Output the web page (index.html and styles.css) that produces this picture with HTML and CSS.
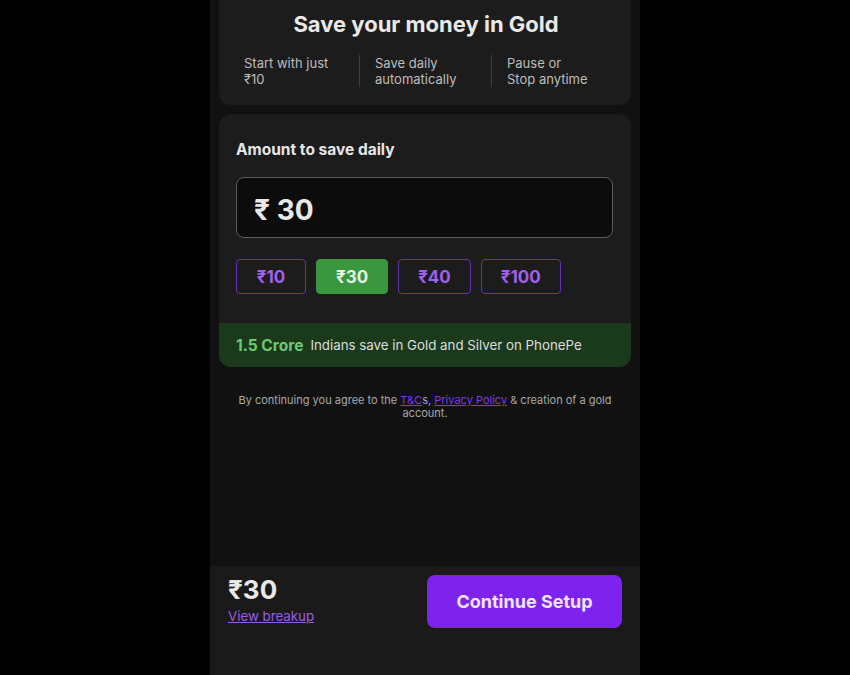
FILE: index.html
```html
<!DOCTYPE html>
<html lang="en">
<head>
<meta charset="utf-8">
<title>Save in Gold</title>
<link rel="stylesheet" href="styles.css">
</head>
<body>
<div class="phone">
  <section class="card intro">
    <h1 class="title">Save your money in Gold</h1>
    <div class="features">
      <div class="feature">Start with just<br>₹10</div>
      <div class="feature divided">Save daily<br>automatically</div>
      <div class="feature divided">Pause or<br>Stop anytime</div>
    </div>
  </section>

  <section class="card amount">
    <div class="amount-body">
      <h2 class="label">Amount to save daily</h2>
      <div class="input"><span class="rupee">₹</span> 30</div>
      <div class="chips">
        <button class="chip">₹10</button>
        <button class="chip active">₹30</button>
        <button class="chip">₹40</button>
        <button class="chip">₹100</button>
      </div>
    </div>
    <div class="band"><span class="band-strong">1.5 Crore</span> Indians save in Gold and Silver on PhonePe</div>
  </section>

  <p class="terms">By continuing you agree to the <a href="#">T&amp;C</a>s, <a href="#">Privacy Policy</a> &amp; creation of a gold account.</p>

  <footer class="bar">
    <div class="total">
      <div class="total-amount">₹30</div>
      <a class="breakup" href="#">View breakup</a>
    </div>
    <button class="cta">Continue Setup</button>
  </footer>
</div>
</body>
</html>
```

FILE: styles.css
```css
* { box-sizing: border-box; }
html, body { margin: 0; padding: 0; }
body {
  background: #000;
  font-family: Inter, "Noto Sans", "DejaVu Sans", sans-serif;
  display: flex;
  justify-content: center;
  height: 675px;
  overflow: hidden;
}
.phone {
  width: 430px;
  height: 675px;
  background: #111111;
  display: flex;
  flex-direction: column;
  overflow: hidden;
}
.card {
  margin: 0 9px;
  background: #1c1c1c;
  border-radius: 12px;
}
.intro {
  margin-top: -14px;
  padding: 24px 7px 18px 9px;
}
.title {
  margin: 0;
  text-align: center;
  font-size: 22px;
  line-height: 28px;
  font-weight: 700;
  color: #e9e9e9;
}
.features {
  margin-top: 17px;
  display: grid;
  grid-template-columns: 131px 132px 1fr;
}
.feature {
  padding-left: 16px;
  font-size: 13px;
  line-height: 16px;
  color: #bdbdbd;
}
.feature.divided {
  border-left: 1px solid #3d3d3d;
  padding-left: 15px;
}
.amount {
  margin-top: 9px;
  overflow: hidden;
}
.amount-body { padding: 26px 18px 29px 17px; }
.label {
  margin: 0;
  font-size: 15.5px;
  line-height: 20px;
  font-weight: 700;
  color: #e6e6e6;
}
.input {
  margin-top: 17px;
  height: 61px;
  background: #0c0c0c;
  border: 1px solid #5b5b5b;
  border-radius: 8px;
  padding: 4px 0 0 17px;
  display: flex;
  align-items: center;
  font-size: 28px;
  font-weight: 700;
  color: #e8e8e8;
  white-space: pre;
}
.chips {
  margin-top: 21px;
  display: flex;
  gap: 10px;
}
.chip {
  height: 35px;
  min-width: 70px;
  padding: 0 19px;
  background: transparent;
  border: 1.5px solid #6a30b4;
  border-radius: 4px;
  font-family: inherit;
  font-size: 17px;
  font-weight: 700;
  color: #a060f0;
}
.chip.active {
  background: #3b973f;
  border-color: #3b973f;
  color: #e4f3e4;
}
.band {
  height: 44px;
  background: #1b3a1c;
  padding-left: 17px;
  display: flex;
  align-items: center;
  gap: 7px;
  font-size: 13.3px;
  color: #dcdcdc;
}
.band-strong {
  font-size: 15.5px;
  font-weight: 700;
  color: #6dc870;
}
.terms {
  margin: 27px 0 0;
  padding: 0 26px;
  text-align: center;
  font-size: 11px;
  line-height: 13px;
  color: #a8a8a8;
}
.terms a { color: #7d3ae8; }
.bar {
  margin-top: auto;
  height: 109px;
  background: #1a1a1a;
  display: flex;
  justify-content: space-between;
  align-items: flex-start;
  padding: 9px 18px 0 18px;
}
.total { padding-top: 1px; }
.total-amount {
  font-size: 26px;
  line-height: 28px;
  font-weight: 700;
  color: #e8e8e8;
}
.breakup {
  display: block;
  margin-top: 3px;
  font-size: 13.3px;
  line-height: 18px;
  color: #9a5ee0;
}
.cta {
  width: 195px;
  height: 53px;
  border: none;
  border-radius: 8px;
  background: #7e22ee;
  font-family: inherit;
  font-size: 18px;
  font-weight: 700;
  color: #efe6ff;
}
```
